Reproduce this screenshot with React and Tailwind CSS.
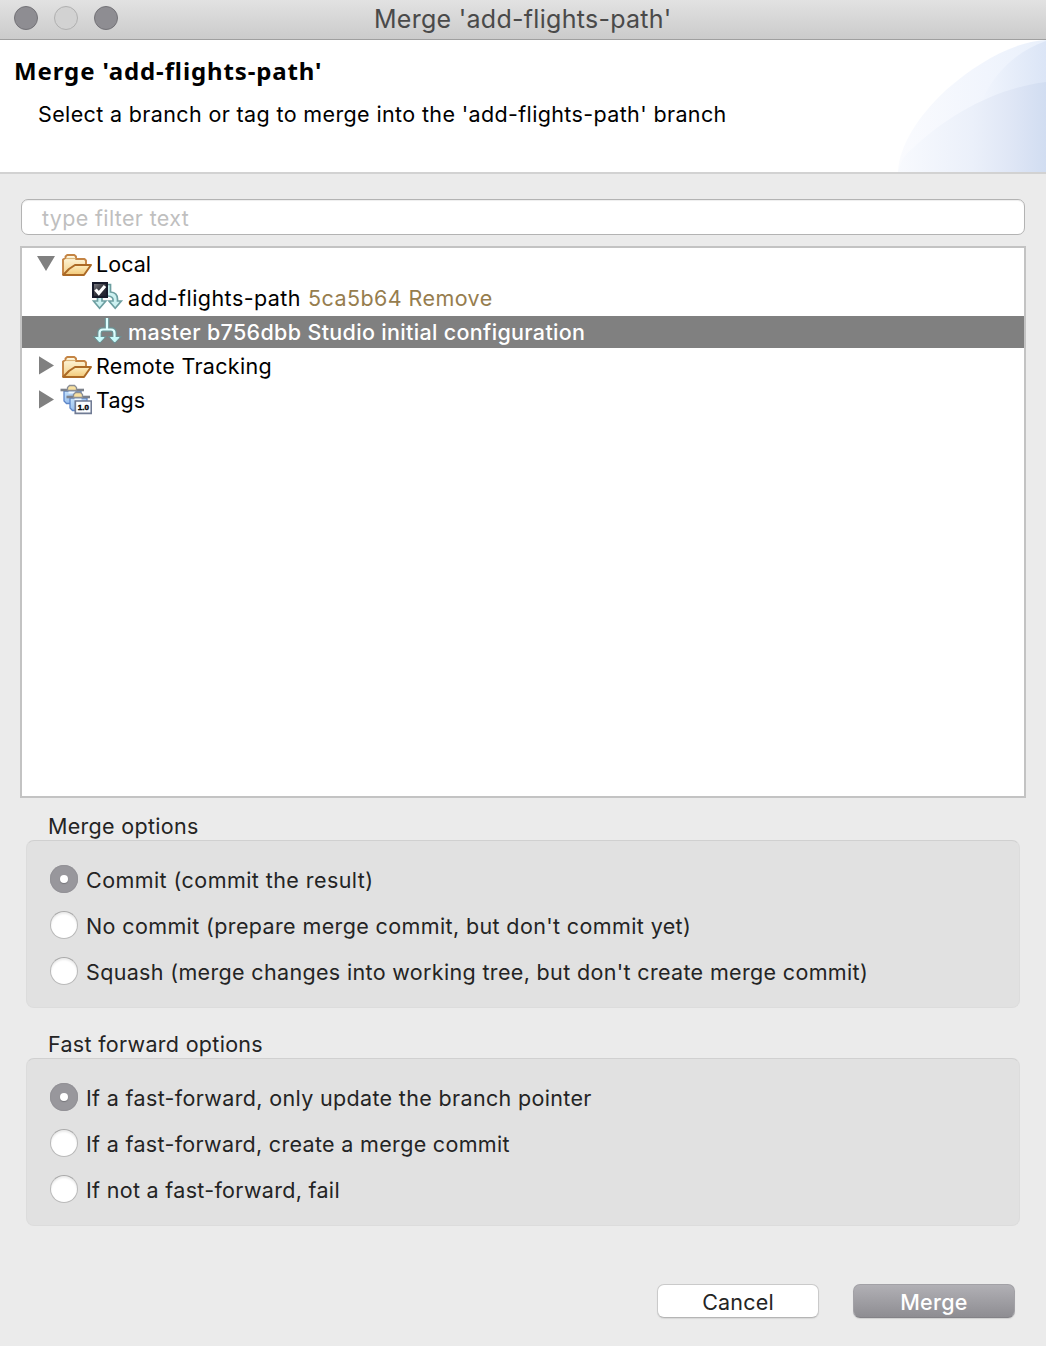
function FolderIcon() {
  return (
    <svg className="block h-8 w-8 shrink-0" viewBox="0 0 32 32" fill="none">
      <defs>
        <linearGradient id="folderBack" x1="0" y1="0" x2="0" y2="1">
          <stop offset="0" stopColor="#fffbe6" />
          <stop offset="1" stopColor="#f3cf86" />
        </linearGradient>
        <linearGradient id="folderFront" x1="0" y1="0" x2="0" y2="1">
          <stop offset="0" stopColor="#fdeec0" />
          <stop offset="1" stopColor="#f2c877" />
        </linearGradient>
      </defs>
      <path d="M3 27V11.500L5.500 10V8.500L7.200 7H14.300L16 8.500V11H24.500L26 12.500V17" fill="url(#folderBack)" stroke="#c48444" strokeWidth="1.900" strokeLinejoin="round" />
      <path d="M6 10.500H15.500" stroke="#dcb57a" strokeWidth="1.200" />
      <path d="M3.200 27L9 21L15 17H31L24 27Z" fill="url(#folderFront)" stroke="#ac6a26" strokeWidth="2" strokeLinejoin="round" />
    </svg>
  );
}

function CheckedBranchIcon() {
  return (
    <svg className="block h-8 w-8 shrink-0" viewBox="0 0 32 32" fill="none">
      <defs>
        <linearGradient id="checkBack" x1="0" y1="0" x2="1" y2="1">
          <stop offset="0" stopColor="#85858b" />
          <stop offset=".5" stopColor="#33343c" />
          <stop offset="1" stopColor="#191c2c" />
        </linearGradient>
      </defs>
      <path d="M16 2.500H18.500V10Q25.500 10.500 25.500 17V19H29.300L23.200 26.300L17 19H21V17.500Q21 14.500 16 14" fill="#cdf1f1" stroke="#6d9fa1" strokeWidth="1.700" />
      <path d="M5.500 14V19H1.500L7.600 26.300L13.800 19H10V14" fill="#cdf1f1" stroke="#6d9fa1" strokeWidth="1.700" />
      <path d="M1 1H15V15H1Z" fill="url(#checkBack)" stroke="#171a2a" strokeWidth="2" />
      <path d="M3.500 7.500L6.800 11.300L13 4" stroke="#fff" strokeWidth="3.200" />
    </svg>
  );
}

function BranchIcon() {
  return (
    <svg className="block h-8 w-8 shrink-0" viewBox="0 0 32 32" fill="none">
      <g stroke="#5f9fa2" strokeWidth="4.500" opacity=".65">
        <path d="M15 2V13M7.500 22V17Q7.500 13.500 11 13.500H19Q22.500 13.500 22.500 17V22" />
        <path d="M3.500 21.500H12L7.700 26ZM18.500 21.500H27L22.700 26Z" strokeWidth="2.500" />
      </g>
      <path d="M15 2V13M7.500 22V17Q7.500 13.500 11 13.500H19Q22.500 13.500 22.500 17V22" stroke="#dcffff" strokeWidth="2.200" />
      <path d="M3.500 21.500H12L7.700 26ZM18.500 21.500H27L22.700 26Z" fill="#c8fafa" stroke="#c8fafa" />
    </svg>
  );
}

function TagBag() {
  return (
    <>
      <path d="M4 7V17L6.500 19.500H18.500L21 17V7Z" fill="url(#bag)" stroke="#5d86c8" strokeWidth="1.300" />
      <path d="M0.500 6H24" stroke="#7c818a" strokeWidth="2.600" />
      <path d="M7.500 6.500V3.500L9.500 1.500H14.500L16.500 3.500V6.500Z" fill="#f8e0a0" stroke="#8b8e94" strokeWidth="1.300" />
      <path d="M8.500 8.500H15.500" stroke="#eef7ff" strokeWidth="2" />
    </>
  );
}

function TagsIcon() {
  return (
    <svg className="block h-8 w-8 shrink-0" viewBox="0 0 32 32" fill="none">
      <defs>
        <linearGradient id="bag" x1="0" y1="0" x2="1" y2="1">
          <stop offset="0" stopColor="#c9e4fb" />
          <stop offset="1" stopColor="#78a6e6" />
        </linearGradient>
      </defs>
      <TagBag />
      <g transform="translate(6 7)"><TagBag /></g>
      <path d="M15.300 17H31.300V29.300H15.300Z" fill="#fbfdff" stroke="#707b94" strokeWidth="1.700" />
      <text x="23.300" y="26.300" textAnchor="middle" className="font-['Liberation_Sans',sans-serif] text-[8px] font-bold tracking-normal" fill="#000" stroke="#000" strokeWidth=".4">1.0</text>
    </svg>
  );
}

function Arrow({ open }) {
  return (
    <svg className="block h-8 w-[18px] shrink-0" viewBox="0 0 18 32">
      <path d={open ? "M0 8H18L9 23Z" : "M2 6.300V24.500L17 15.400Z"} fill="#808080" />
    </svg>
  );
}

function Radio({ checked, children }) {
  return (
    <label className="flex h-[46px] items-center">
      {checked ? (
        <span className="flex h-7 w-7 shrink-0 items-center justify-center rounded-full bg-[#98979c] shadow-[inset_0_0_0_1px_#939297]">
          <span className="h-2 w-2 rounded-full bg-white shadow-[0_1px_1px_#77767b]" />
        </span>
      ) : (
        <span className="h-7 w-7 shrink-0 rounded-full border border-[#b9b9b9] border-t-[#a9a9a9] bg-white shadow-[inset_0_2px_2px_#ececec]" />
      )}
      <span className="ml-2 translate-y-px whitespace-nowrap">{children}</span>
    </label>
  );
}

function Group({ title, children }) {
  return (
    <section className="mx-[26px]">
      <h2 className="ml-[22px] h-7 leading-7 tracking-[0.300px]">{title}</h2>
      <div className="h-[168px] rounded-lg border border-[#dcdcdc] border-t-[#d0d0d0] bg-[#e1e1e1] pt-[15px] pl-[23px] tracking-[0.340px]">
        {children}
      </div>
    </section>
  );
}

export default function App() {
  return (
    <main className="flex h-[1346px] w-[1046px] flex-col overflow-hidden bg-[#ebebeb] font-['Inter',sans-serif] text-[21.5px] leading-8 text-[#242424]">
      <header className="flex h-10 shrink-0 items-center border-b border-[#9f9f9f] bg-gradient-to-b from-[#e2e2e2] to-[#cbcbcb]">
        <div className="flex w-[375px] gap-4 pb-[3px] pl-[14px]">
          <span className="h-6 w-6 rounded-full border border-[#737277] bg-[#8e8d92]" />
          <span className="h-6 w-6 rounded-full border border-[#b0b0b0] bg-[#d2d2d2]" />
          <span className="h-6 w-6 rounded-full border border-[#737277] bg-[#8e8d92]" />
        </div>
        <h1 className="-ml-px pb-px text-[25px] whitespace-nowrap tracking-[0.280px] text-[#4a4a4a]">Merge 'add-flights-path'</h1>
      </header>

      <section className="flex h-[134px] shrink-0 justify-between border-b-2 border-[#d2d2d2] bg-white text-black">
        <div className="whitespace-nowrap">
          <h2 className="mt-[15px] ml-[14px] font-['Noto_Sans',sans-serif] text-2xl leading-8 font-bold tracking-[0.880px]">Merge 'add-flights-path'</h2>
          <p className="mt-[11px] ml-[38px] tracking-[0.365px]">Select a branch or tag to merge into the 'add-flights-path' branch</p>
        </div>
        <svg className="block h-[132px] w-[148px]" viewBox="0 0 148 132">
          <defs>
            <linearGradient id="swooshBack">
              <stop offset="0" stopColor="#fafbfe" />
              <stop offset=".6" stopColor="#f1f5fd" />
              <stop offset="1" stopColor="#e9f0fb" />
            </linearGradient>
            <linearGradient id="swooshTop">
              <stop offset="0" stopColor="#f1f5fd" />
              <stop offset="1" stopColor="#dbe5f6" />
            </linearGradient>
            <linearGradient id="swooshFront">
              <stop offset="0" stopColor="#f8fafe" />
              <stop offset=".5" stopColor="#ebf0fa" />
              <stop offset=".75" stopColor="#e0e7f6" />
              <stop offset="1" stopColor="#d1ddf1" />
            </linearGradient>
          </defs>
          <path d="M0 132C1 106 20 76 48 50C80 22 115 2 148 0V132Z" fill="url(#swooshBack)" />
          <path d="M84 60C95 36 116 12 148 1V60Z" fill="url(#swooshTop)" />
          <path d="M0 132Q3 117 15 108C50 75 98 48 148 42V132Z" fill="url(#swooshFront)" />
        </svg>
      </section>

      <div className="mx-[21px] mt-[25px] flex h-9 shrink-0 items-center rounded-[7px] border border-[#b3b3b3] bg-white pl-5 shadow-[inset_0_1px_1px_#eeeeee]">
        <span className="translate-y-px tracking-[0.350px] text-[#bfbfbf]">type filter text</span>
      </div>

      <div className="mx-5 mt-[11px] flex h-[552px] shrink-0 flex-col gap-0.5 border-2 border-[#c3c3c3] bg-white whitespace-nowrap text-black">
        <div className="flex h-8 pl-[15px]">
          <Arrow open />
          <span className="ml-[5px]"><FolderIcon /></span>
          <span className="ml-1 tracking-[0.050px]">Local</span>
        </div>
        <div className="flex h-8 pl-[70px]">
          <CheckedBranchIcon />
          <span className="ml-1 tracking-[0.450px]">add-flights-path</span>
          <span className="ml-[7px] tracking-[0.420px] text-[#967d4e]">5ca5b64 Remove</span>
        </div>
        <div className="flex h-8 bg-[#808080] pl-[70px] text-white">
          <BranchIcon />
          <span className="ml-1 font-medium tracking-[0.330px]">master b756dbb Studio initial configuration</span>
        </div>
        <div className="flex h-8 pl-[15px]">
          <Arrow />
          <span className="ml-[5px]"><FolderIcon /></span>
          <span className="ml-1 tracking-[0.320px]">Remote Tracking</span>
        </div>
        <div className="flex h-8 pl-[15px]">
          <Arrow />
          <span className="ml-[5px]"><TagsIcon /></span>
          <span className="ml-1 tracking-[0.100px]">Tags</span>
        </div>
      </div>

      <div className="mt-[14px] flex flex-col gap-[22px]">
        <Group title="Merge options">
          <Radio checked><span className="tracking-[0.430px]">Commit (commit the result)</span></Radio>
          <Radio><span className="tracking-[0.375px]">No commit (prepare merge commit, but don't commit yet)</span></Radio>
          <Radio>Squash (merge changes into working tree, but don't create merge commit)</Radio>
        </Group>
        <Group title="Fast forward options">
          <Radio checked>If a fast-forward, only update the branch pointer</Radio>
          <Radio><span className="tracking-[0.320px]">If a fast-forward, create a merge commit</span></Radio>
          <Radio><span className="tracking-[0.310px]">If not a fast-forward, fail</span></Radio>
        </Group>
      </div>

      <footer className="mt-[58px] mr-[31px] flex justify-end gap-[34px]">
        <button className="h-[34px] w-[162px] rounded-[7px] border border-[#cacaca] border-b-[#b5b5b5] bg-white pt-0.5 leading-[30px] tracking-[0.200px] shadow-[0_1px_1px_#d8d8d8]">Cancel</button>
        <button className="h-[34px] w-[162px] rounded-[7px] border border-[#a2a1a6] border-b-[#838287] bg-gradient-to-b from-[#b1b0b5] to-[#8e8d92] pt-0.5 leading-[30px] font-medium tracking-[0.300px] text-white shadow-[0_1px_1px_#d0d0d0]">Merge</button>
      </footer>
    </main>
  );
}
